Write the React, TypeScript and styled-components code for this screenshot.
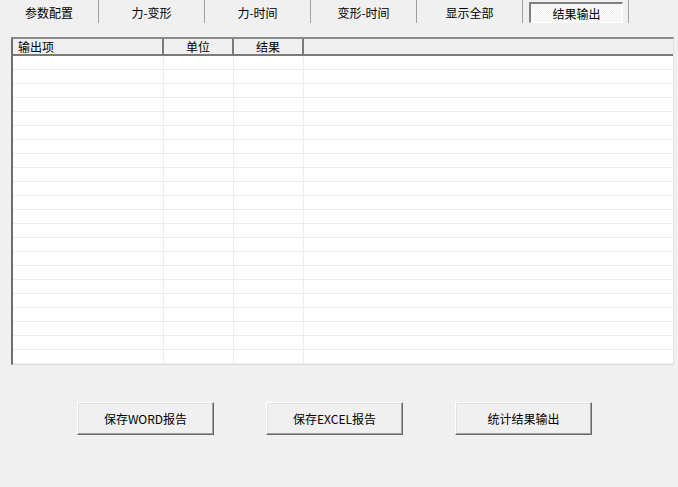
import React from 'react'
import styled, { createGlobalStyle } from 'styled-components'

const GlobalStyle = createGlobalStyle`
  html, body {
    margin: 0;
    padding: 0;
    background: #f0f0f0;
  }
  body {
    font-family: "Noto Sans CJK SC", "Liberation Sans", sans-serif;
    font-size: 12px;
    color: #000;
  }
`

const Page = styled.div`
  width: 678px;
  height: 487px;
  background: #f0f0f0;
  overflow: hidden;
  display: flex;
  flex-direction: column;
`

const TabBar = styled.div`
  display: flex;
  height: 24px;
`

const Tab = styled.div<{ $width: number }>`
  width: ${({ $width }) => $width}px;
  height: 23px;
  border-right: 1px solid #a0a0a0;
  box-sizing: border-box;
  display: flex;
  align-items: center;
  justify-content: center;
  padding-top: 1px;
`

const SelectedTab = styled.div`
  width: 100%;
  height: 21px;
  margin: 1px 5px 0 6px;
  box-sizing: border-box;
  display: flex;
  align-items: center;
  justify-content: center;
  border-top: 2px solid #808080;
  border-left: 2px solid #808080;
  border-right: 1px solid #ffffff;
  border-bottom: 1px solid #ffffff;
  background-color: #f0f0f0;
  background-image: repeating-conic-gradient(#ffffff 0 25%, #f0f0f0 0 50%);
  background-size: 2px 2px;
`

const GridWrap = styled.div`
  margin: 13px 0 0 11px;
  width: 663px;
  height: 328px;
  box-sizing: border-box;
  border-top: 2px solid #8a8a8a;
  border-left: 2px solid #6e6e6e;
  border-right: 1px solid #e3e3e3;
  border-bottom: 1px solid #dcdcdc;
  background: #ffffff;
  display: flex;
  flex-direction: column;
  overflow: hidden;
`

const HeaderRow = styled.div`
  display: flex;
  height: 15px;
  flex: none;
  background: #f0f0f0;
  border-bottom: 2px solid #7a7a7a;
`

const HeaderCell = styled.div<{ $width?: number; $align?: string }>`
  ${({ $width }) => ($width ? `width: ${$width}px;` : 'flex: 1;')}
  box-sizing: border-box;
  border-right: 2px solid #7a7a7a;
  display: flex;
  align-items: center;
  justify-content: ${({ $align }) => $align || 'center'};
  padding-left: ${({ $align }) => ($align === 'flex-start' ? '5px' : '0')};
  line-height: 15px;
  &:last-child {
    border-right: none;
  }
`

const Body = styled.div`
  flex: 1;
  display: flex;
  flex-direction: column;
`

const Row = styled.div`
  display: flex;
  height: 14px;
  flex: none;
  box-sizing: border-box;
  border-bottom: 1px solid #ececec;
`

const Cell = styled.div<{ $width?: number }>`
  ${({ $width }) => ($width ? `width: ${$width}px;` : 'flex: 1;')}
  box-sizing: border-box;
  border-right: 1px solid #ececec;
  &:last-child {
    border-right: none;
  }
`

const ButtonRow = styled.div`
  display: flex;
  gap: 52px;
  margin: 37px 0 0 77px;
`

const Button = styled.button`
  width: 137px;
  height: 33px;
  box-sizing: border-box;
  background: #f0f0f0;
  font-family: "Noto Sans CJK SC", "Liberation Sans", sans-serif;
  font-size: 12px;
  color: #000;
  padding: 0;
  border-top: 1px solid #ffffff;
  border-left: 1px solid #ffffff;
  border-right: 1px solid #696969;
  border-bottom: 1px solid #696969;
  box-shadow: inset -1px -1px 0 #a0a0a0, inset 1px 1px 0 #e3e3e3;
`

const tabs = ['参数配置', '力-变形', '力-时间', '变形-时间', '显示全部']
const columns = [151, 70, 70]

export default function App() {
  const rows = Array.from({ length: 23 })
  return (
    <Page>
      <GlobalStyle />
      <TabBar>
        {tabs.map((t, i) => (
          <Tab key={t} $width={i === 0 ? 99 : 106}>
            {t}
          </Tab>
        ))}
        <Tab $width={106}>
          <SelectedTab>结果输出</SelectedTab>
        </Tab>
      </TabBar>

      <GridWrap>
        <HeaderRow>
          <HeaderCell $width={151} $align="flex-start">输出项</HeaderCell>
          <HeaderCell $width={70}>单位</HeaderCell>
          <HeaderCell $width={70}>结果</HeaderCell>
          <HeaderCell />
        </HeaderRow>
        <Body>
          {rows.map((_, r) => (
            <Row key={r}>
              {columns.map((w, c) => (
                <Cell key={c} $width={w} />
              ))}
              <Cell />
            </Row>
          ))}
        </Body>
      </GridWrap>

      <ButtonRow>
        <Button>保存WORD报告</Button>
        <Button>保存EXCEL报告</Button>
        <Button>统计结果输出</Button>
      </ButtonRow>
    </Page>
  )
}
